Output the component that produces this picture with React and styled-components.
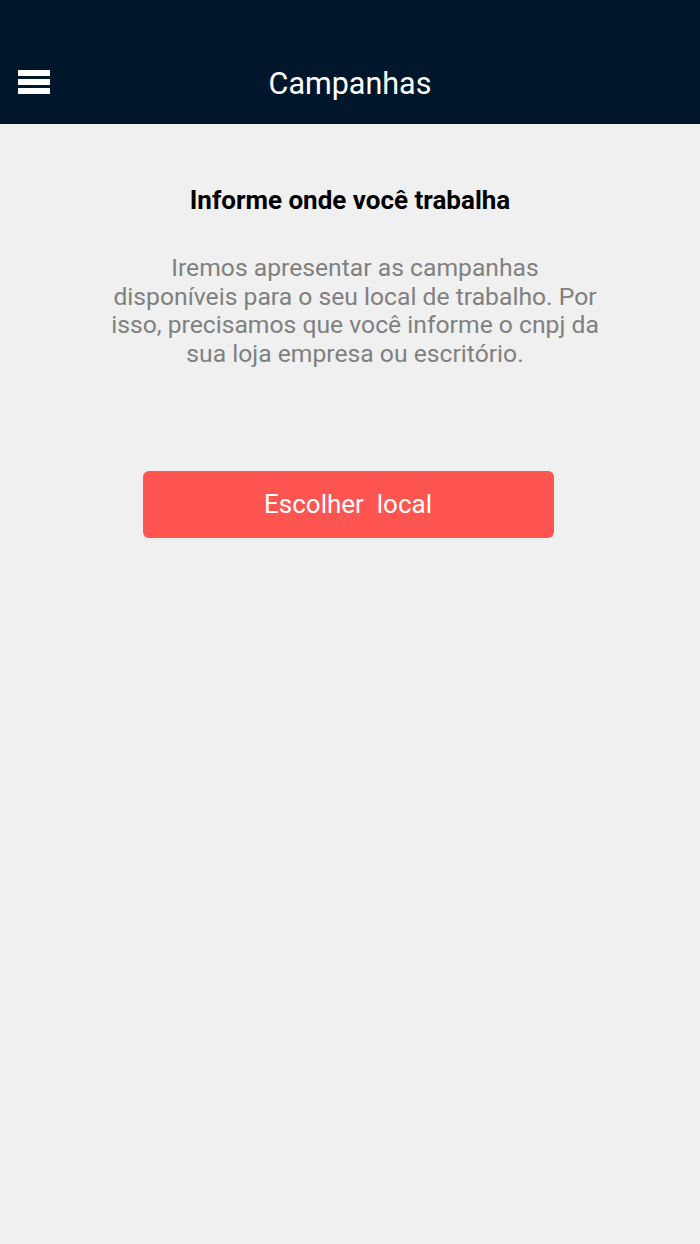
import styled, { createGlobalStyle } from "styled-components";

const GlobalStyle = createGlobalStyle`
  html, body {
    margin: 0;
    padding: 0;
    background: #f0f0f0;
  }
  body {
    font-family: Roboto, "Liberation Sans", sans-serif;
  }
`;

const Page = styled.div`
  min-height: 1244px;
  display: flex;
  flex-direction: column;
  background: #f0f0f0;
`;

const Header = styled.header`
  height: 124px;
  background: #00162a;
  display: grid;
  grid-template-columns: 50px 1fr 50px;
  align-items: center;
  padding: 44px 18px 0;
  box-sizing: border-box;
`;

const MenuButton = styled.button`
  background: none;
  border: none;
  padding: 0;
  width: 32px;
  display: flex;
  flex-direction: column;
  gap: 3px;
  margin-top: -5px;
  cursor: pointer;

  span {
    display: block;
    height: 6px;
    background: #ffffff;
  }
`;

const Title = styled.h1`
  margin: 0;
  text-align: center;
  color: #ffffff;
  font-size: 30.5px;
  font-weight: 400;
  line-height: 1;
`;

const Content = styled.main`
  display: flex;
  flex-direction: column;
  align-items: center;
  padding-top: 62px;
`;

const Heading = styled.h2`
  margin: 0;
  font-size: 26px;
  font-weight: 700;
  color: #000000;
  line-height: 28px;
`;

const Description = styled.p`
  margin: 40px 0 0;
  padding-left: 10px;
  text-align: center;
  color: #808080;
  font-size: 24.7px;
  line-height: 28.7px;
  white-space: nowrap;
`;

const ActionButton = styled.button`
  margin-top: 102px;
  margin-right: 4px;
  width: 411px;
  height: 67px;
  border: none;
  border-radius: 6px;
  background: #ff5551;
  color: #ffffff;
  font-family: inherit;
  font-size: 26px;
  white-space: pre;
  cursor: pointer;
`;

const lines = [
  "Iremos apresentar as campanhas",
  "disponíveis para o seu local de trabalho. Por",
  "isso, precisamos que você informe o cnpj da",
  "sua loja empresa ou escritório.",
];

export default function App() {
  return (
    <>
      <GlobalStyle />
      <Page>
        <Header>
          <MenuButton aria-label="menu">
            <span />
            <span />
            <span />
          </MenuButton>
          <Title>Campanhas</Title>
        </Header>
        <Content>
          <Heading>Informe onde você trabalha</Heading>
          <Description>
            {lines.map((l, i) => (
              <span key={i}>
                {l}
                {i < lines.length - 1 && <br />}
              </span>
            ))}
          </Description>
          <ActionButton>{"Escolher  local"}</ActionButton>
        </Content>
      </Page>
    </>
  );
}
